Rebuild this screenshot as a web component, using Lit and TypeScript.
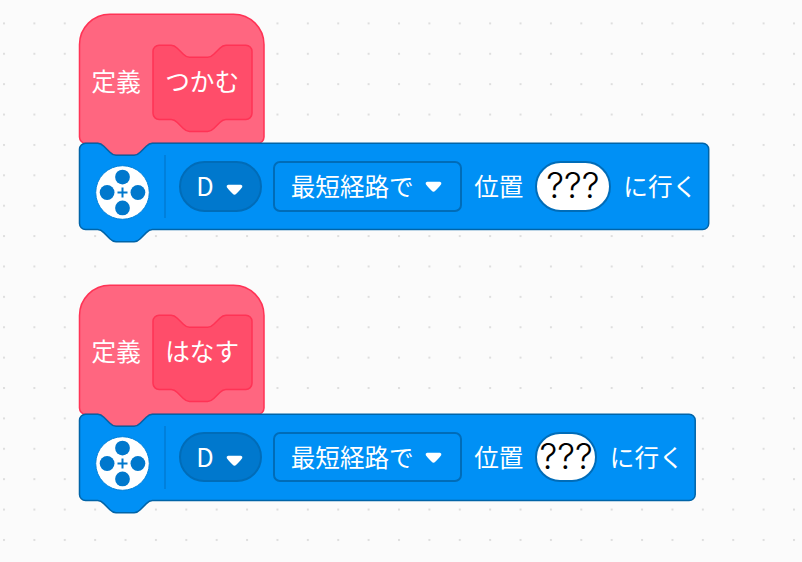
import { LitElement, html, svg, css } from "lit";
import { customElement, property } from "lit/decorators.js";

// Workspace zoom; block outlines are built in unscaled block units.
const ZOOM = 1.519;

const NOTCH_RIGHT = "c2,0 3,1 4,2 l4,4 c1,1 2,2 4,2 h12 c2,0 3,-1 4,-2 l4,-4 c1,-1 2,-2 4,-2";
const NOTCH_LEFT = "c-2,0 -3,1 -4,2 l-4,4 c-1,1 -2,2 -4,2 h-12 c-2,0 -3,-1 -4,-2 l-4,-4 c-1,-1 -2,-2 -4,-2";

function bottomEdge(w: number, h: number) {
  return `V${h - 4} a4,4 0 0,1 -4,4 H48 ${NOTCH_LEFT} H4 a4,4 0 0,1 -4,-4 Z`;
}

function stackPath(w: number, h: number) {
  return `M0,4 A4,4 0 0,1 4,0 H12 ${NOTCH_RIGHT} H${w - 4} a4,4 0 0,1 4,4 ${bottomEdge(w, h)}`;
}

function hatPath(w: number, h: number) {
  return `M0,20 a20,20 0 0,1 20,-20 H${w - 20} a20,20 0 0,1 20,20 ${bottomEdge(w, h)}`;
}

@customElement("block-outline")
class BlockOutline extends LitElement {
  static properties = { kind: {}, w: { type: Number }, h: { type: Number } };
  declare kind: string;
  declare w: number;
  declare h: number;
  static styles = css`
    :host { position: absolute; inset: 0; }
    svg { display: block; width: 100%; height: 100%; overflow: visible; }
    path { stroke-width: 1; }
    .hat { fill: #ff6680; stroke: #ff3355; }
    .proto { fill: #ff4d6a; stroke: #ff3355; }
    .motor { fill: #0090f5; stroke: #0064a8; }
  `;
  render() {
    const w = this.w / ZOOM;
    const h = this.h / ZOOM;
    const d = this.kind === "hat" ? hatPath(w, h) : stackPath(w, h);
    // Outer outlines straddle the pixel boundary; the prototype sits on whole pixels.
    const dx = this.kind === "proto" ? 0 : -0.5;
    return html`<svg>${svg`<g transform="translate(${dx} 0.2) scale(${ZOOM})"><path class=${this.kind} d=${d}></path></g>`}</svg>`;
  }
}

@customElement("define-hat")
class DefineHat extends LitElement {
  @property() name = "";
  static styles = css`
    :host {
      position: relative; display: flex; align-items: flex-start; box-sizing: border-box;
      width: 184.5px; height: 129px; padding: 30.4px 0 0 12px; color: #fff;
    }
    .label { position: relative; width: 61.6px; line-height: 71.5px; white-space: nowrap; }
    .proto { position: relative; width: 99px; height: 74.2px; }
    .name { position: relative; padding-left: 12px; line-height: 71.5px; white-space: nowrap; }
  `;
  render() {
    return html`
      <block-outline kind="hat" w="184.5" h="129"></block-outline>
      <span class="label">定義</span>
      <div class="proto">
        <block-outline kind="proto" w="99" h="74.2"></block-outline>
        <div class="name">${this.name}</div>
      </div>
    `;
  }
}

@customElement("motor-block")
class MotorBlock extends LitElement {
  @property({ type: Number }) width = 630;
  @property({ type: Number }) slotWidth = 74.5;
  static styles = css`
    :host { position: relative; display: block; height: 86.4px; color: #fff; }
    .row { position: relative; display: flex; align-items: center; height: 100%; padding-left: 15.5px; white-space: nowrap; }
    .icon { flex: none; width: 55px; height: 55px; margin-top: 12px; }
    .rule { flex: none; width: 2px; height: 63px; margin: 0 12.3px 0 14.3px; background: #0080dc; }
    .row > span:not(.rule), .field > span { position: relative; padding-bottom: 2px; }
    .field {
      flex: none; display: flex; align-items: center; box-sizing: border-box; height: 50.5px;
      border: 2px solid #006cb8; border-radius: 7px;
    }
    .port { width: 83.5px; padding-left: 15.5px; border-radius: 26px; background: #0078cd; }
    .port > span { width: 17px; font-size: 25.3px; }
    .port svg { margin: 8px 0 0 12.5px; }
    .path { width: 189px; margin-left: 11px; padding-left: 15.5px; }
    .path svg { margin: 2px 0 0 11.5px; }
    .caret { flex: none; width: 17px; height: 12px; }
    .word { flex: none; width: 49px; margin: 0 12px 0 12px; }
    .value {
      justify-content: center; border-radius: 26px; background: #fff; color: #000;
      font: 350 35.5px/46px Inter, "Liberation Sans", sans-serif;
    }
    .tail { margin-left: 12.6px; }
  `;
  caret() {
    return html`<svg class="caret" viewBox="0 0 17 12">
      <path d="M2.2 .8H14.8Q16.8 1 16.3 3Q15.9 4 10.3 9.8Q8.5 11.8 6.7 9.8Q1.1 4 .7 3Q.2 1 2.2 .8Z" fill="#fff"></path>
    </svg>`;
  }
  render() {
    return html`
      <block-outline kind="motor" w=${this.width} h="86.4"></block-outline>
      <div class="row">
        <svg class="icon" viewBox="-27.5 -27.5 55 55">
          <circle r="26.8" fill="#fff" stroke="#0080da" stroke-width="1"></circle>
          <g fill="#0078cd">
            <circle cy="-15.4" r="7.4"></circle><circle cx="15.4" r="7.4"></circle>
            <circle cy="15.4" r="7.4"></circle><circle cx="-15.4" r="7.4"></circle>
          </g>
          <path d="M-5 0H5M0 -5V5" stroke="#0078cd" stroke-width="2"></path>
        </svg>
        <span class="rule"></span>
        <div class="field port"><span>D</span>${this.caret()}</div>
        <div class="field path"><span>最短経路で</span>${this.caret()}</div>
        <span class="word">位置</span>
        <div class="field value" style="width:${this.slotWidth}px">???</div>
        <span class="tail">に行く</span>
      </div>
    `;
  }
}

@customElement("app-root")
class AppRoot extends LitElement {
  static styles = css`
    :host {
      position: relative; display: block; width: 802px; height: 562px; overflow: hidden;
      background-color: #fbfbfb;
      font: 24.6px "Noto Sans CJK JP", sans-serif;
    }
    .grid { position: absolute; inset: 0; width: 100%; height: 100%; }
    .script { position: absolute; left: 79.6px; }
    .grab { top: 14.2px; }
    .release { top: 284.9px; }
  `;
  render() {
    return html`
      <svg class="grid">
        <defs>
          <pattern id="dots" x="3" y="22.4" width="30.385" height="30.385" patternUnits="userSpaceOnUse">
            <rect width="2" height="2" fill="#dedede"></rect>
          </pattern>
        </defs>
        <rect width="100%" height="100%" fill="url(#dots)"></rect>
      </svg>
      <div class="script grab">
        <define-hat name="つかむ"></define-hat>
        <motor-block width="629.2" slotWidth="75.5"></motor-block>
      </div>
      <div class="script release">
        <define-hat name="はなす"></define-hat>
        <motor-block width="615.7" slotWidth="62"></motor-block>
      </div>
    `;
  }
}
